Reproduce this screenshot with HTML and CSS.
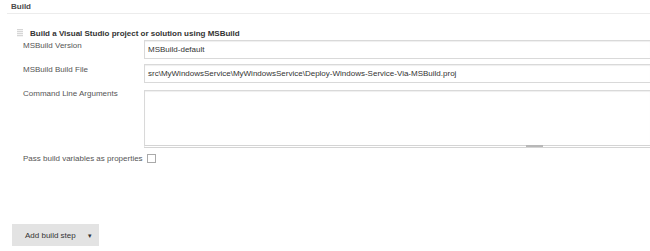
FILE: index.html
```html
<!DOCTYPE html>
<html lang="en">
<head>
    <meta charset="UTF-8">
    <title>Build</title>
    <link rel="stylesheet" href="styles.css">
</head>
<body>
    <div class="section-head">Build</div>

    <div class="step">
        <div class="step-title">
            <span class="handle"></span>
            <span>Build a Visual Studio project or solution using MSBuild</span>
        </div>
        <div class="fields">
            <label class="field-label">MSBuild Version</label>
            <div class="field-box">MSBuild-default</div>

            <label class="field-label">MSBuild Build File</label>
            <div class="field-box">src\MyWindowsService\MyWindowsService\Deploy-Windows-Service-Via-MSBuild.proj</div>

            <label class="field-label">Command Line Arguments</label>
            <div class="field-box area"><span class="grip"></span></div>
        </div>
        <div class="check-row">
            <span>Pass build variables as properties</span>
            <span class="checkbox"></span>
        </div>
    </div>

    <button class="add-step">Add build step <span class="caret">&#9662;</span></button>
</body>
</html>
```

FILE: styles.css
```css
body {
    margin: 0;
    width: 650px;
    height: 251px;
    overflow: hidden;
    background: #fff;
    font-family: "Liberation Sans", Arial, sans-serif;
    font-size: 8px;
    color: #555;
}
.section-head {
    margin-left: 7px;
    padding: 2px 0 2px 4px;
    line-height: 9px;
    font-weight: bold;
    color: #4a4a4a;
    border-bottom: 1px solid #ececec;
}
.step {
    padding-left: 17px;
    margin-top: 14px;
}
.step-title {
    display: flex;
    align-items: center;
    gap: 7px;
    height: 10px;
    font-weight: bold;
    color: #333;
}
.handle {
    width: 6px;
    height: 8px;
    background: repeating-linear-gradient(#d6d6d6 0 1px, #f4f4f4 1px 2px);
}
.fields {
    display: grid;
    grid-template-columns: 121px 1fr;
    row-gap: 5px;
    margin-top: 2px;
    padding-left: 6px;
}
.field-label {
    padding-top: 1px;
    line-height: 9px;
}
.field-box {
    height: 19px;
    box-sizing: border-box;
    border: 1px solid #d9d9d9;
    border-right: none;
    box-shadow: inset 0 1px 1px #efefef;
    padding: 4px 3px 0;
    line-height: 9px;
    color: #333;
    white-space: nowrap;
}
.field-box.area {
    height: 58px;
    margin-top: 2px;
    position: relative;
    border-bottom: 3px double #d4d4d4;
}
.grip {
    position: absolute;
    left: 381px;
    bottom: -2px;
    width: 17px;
    height: 2px;
    background: #b8b8b8;
}
.check-row {
    display: flex;
    align-items: center;
    gap: 4px;
    padding-left: 6px;
    margin-top: 6px;
    line-height: 9px;
}
.checkbox {
    width: 7px;
    height: 7px;
    border: 1px solid #aaa;
    background: #fff;
}
.add-step {
    display: block;
    margin: 61px 0 0 12px;
    width: 87px;
    height: 22px;
    border: none;
    background: #e3e3e3;
    font-family: "Liberation Sans", Arial, sans-serif;
    font-size: 8px;
    color: #333;
    text-align: left;
    padding: 0 0 0 13px;
}
.caret {
    margin-left: 10px;
    font-size: 7px;
}
```
